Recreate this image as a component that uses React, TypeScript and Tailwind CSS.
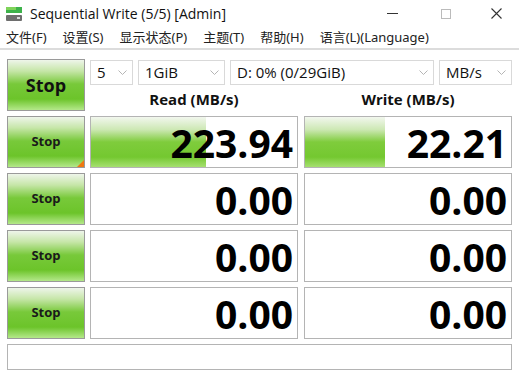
import React from "react";

const ui = { fontFamily: '"Open Sans", "Noto Sans", "Noto Sans CJK SC", sans-serif' };
const cjk = { fontFamily: '"Noto Sans", "Noto Sans CJK SC", sans-serif' };

const greenBtn =
  "bg-[linear-gradient(to_bottom,#eef5ea_0%,#c6e6a8_22%,#78c93a_48%,#6cc42a_78%,#b4e88a_100%)]";
const greenBar =
  "bg-[linear-gradient(to_bottom,#f2f7ee_0%,#cde8b4_25%,#7fcc3c_50%,#74c830_80%,#a6e070_100%)]";

interface Row {
  read: string;
  write: string;
  readPct: number;
  writePct: number;
}

const rows: Row[] = [
  { read: "223.94", write: "22.21", readPct: 56, writePct: 39 },
  { read: "0.00", write: "0.00", readPct: 0, writePct: 0 },
  { read: "0.00", write: "0.00", readPct: 0, writePct: 0 },
  { read: "0.00", write: "0.00", readPct: 0, writePct: 0 },
];

function Combo({ label, width }: { label: string; width: string }) {
  return (
    <div
      className={`${width} h-[25px] border border-[#d9d9d9] bg-white flex items-center justify-between pl-[6px] pr-[5px] text-[15px] text-[#111]`}
    >
      <span>{label}</span>
      <svg width="9" height="6" viewBox="0 0 9 6">
        <path d="M0.5 0.5 L4.5 4.5 L8.5 0.5" fill="none" stroke="#b5b5b5" strokeWidth="1" />
      </svg>
    </div>
  );
}

function Cell({ value, pct }: { value: string; pct: number }) {
  return (
    <div className="relative w-[208px] h-[52px] border border-[#b4b4b4] bg-white overflow-hidden">
      <div className={`absolute left-0 top-0 bottom-0 ${greenBar}`} style={{ width: `${pct}%` }} />
      <div className="relative h-full flex items-center justify-end pr-[4px] text-[39px] font-bold text-black leading-none">
        {value}
      </div>
    </div>
  );
}

export default function App() {
  return (
    <div className="w-[519px] h-[373px] bg-white overflow-hidden" style={ui}>
      {/* Title bar */}
      <div className="h-[27px] flex items-center">
        <svg width="18" height="16" viewBox="0 0 18 16" className="ml-[5px]">
          <rect x="1" y="1" width="16" height="6" fill="#3db24a" />
          <rect x="1" y="1" width="10" height="3" fill="#7fd35a" />
          <rect x="1" y="9" width="16" height="6" rx="1" fill="#6e6e6e" />
          <rect x="12" y="11" width="3" height="2" fill="#d8d8d8" />
        </svg>
        <span className="ml-[7px] text-[14px] text-[#111]">Sequential Write (5/5) [Admin]</span>
        <div className="ml-auto flex items-center">
          <div className="w-[54px] flex justify-center">
            <div className="w-[11px] h-px bg-[#333]" />
          </div>
          <div className="w-[54px] flex justify-center">
            <div className="w-[10px] h-[10px] border border-[#bbb]" />
          </div>
          <div className="w-[46px] flex justify-center">
            <svg width="11" height="11" viewBox="0 0 11 11">
              <path d="M0.5 0.5 L10.5 10.5 M10.5 0.5 L0.5 10.5" stroke="#333" strokeWidth="1.1" />
            </svg>
          </div>
        </div>
      </div>

      {/* Menu bar */}
      <div className="h-[23px] flex items-center text-[13px] text-[#222] border-b-2 border-[#dcdcdc]" style={cjk}>
        <span className="ml-[6px]">文件(F)</span>
        <span className="ml-[16px]">设置(S)</span>
        <span className="ml-[16px]">显示状态(P)</span>
        <span className="ml-[16px]">主题(T)</span>
        <span className="ml-[16px]">帮助(H)</span>
        <span className="ml-[16px]">语言(L)(Language)</span>
      </div>

      {/* Content */}
      <div className="pl-[7px] pt-[9px] flex flex-col gap-[5px]">
        <div className="flex gap-[5px]">
          <div
            className={`w-[78px] h-[52px] border border-[#9a9a9a] ${greenBtn} flex items-center justify-center text-[18px] font-bold text-[#111]`}
          >
            Stop
          </div>
          <div className="flex flex-col">
            <div className="flex gap-[5px] mt-px">
              <Combo label="5" width="w-[43px]" />
              <Combo label="1GiB" width="w-[87px]" />
              <Combo label="D: 0% (0/29GiB)" width="w-[204px]" />
              <Combo label="MB/s" width="w-[73px]" />
            </div>
            <div className="flex gap-[6px] mt-[3px] text-[15px] font-bold text-[#111]">
              <div className="w-[208px] text-center">Read (MB/s)</div>
              <div className="w-[208px] text-center">Write (MB/s)</div>
            </div>
          </div>
        </div>

        {rows.map((r, i) => (
          <div key={i} className="flex gap-[5px]">
            <div
              className={`relative w-[78px] h-[52px] border border-[#9a9a9a] ${greenBtn} flex items-center justify-center text-[13px] font-bold text-[#1a1a1a]`}
            >
              Stop
              {i === 0 && (
                <div className="absolute right-0 bottom-0 w-0 h-0 border-l-[7px] border-l-transparent border-b-[7px] border-b-[#f07810]" />
              )}
            </div>
            <div className="flex gap-[6px]">
              <Cell value={r.read} pct={r.readPct} />
              <Cell value={r.write} pct={r.writePct} />
            </div>
          </div>
        ))}

        <div className="w-[505px] h-[26px] border border-[#b4b4b4] bg-white" />
      </div>
    </div>
  );
}
